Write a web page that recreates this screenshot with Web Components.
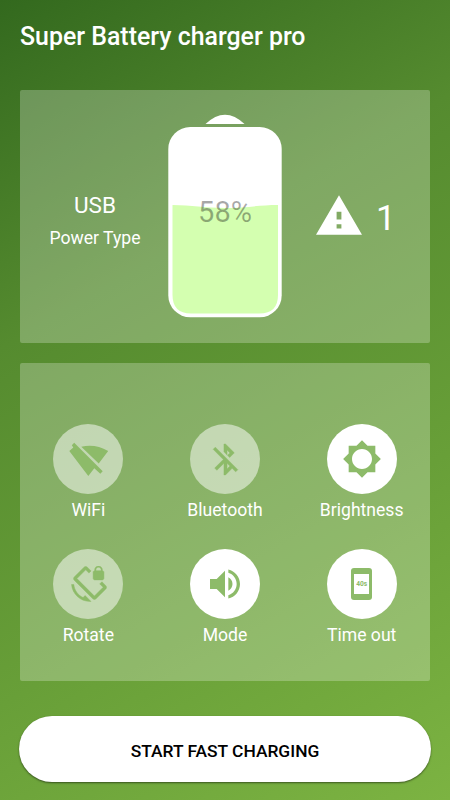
<!DOCTYPE html>
<html lang="en">
<head>
<meta charset="utf-8">
<title>Super Battery charger pro</title>
<style>
  body {
    margin: 0;
    font-family: Roboto, "Liberation Sans", sans-serif;
    color: #fff;
  }
</style>
</head>
<body>
<charger-app></charger-app>

<script>
const icons = {
  wifi: { size: 70, box: 70, path: 'M21.2 18.8L49.7 47.2 47.3 49.7 41.3 44.3 35.3 52 16.3 27 20.3 23.6 18.8 21.3zM28.3 22.8Q42 19.5 55.2 27L45.7 39.6z' },
  bluetooth: { size: 37, path: 'M13 5.83l1.88 1.88-1.6 1.6 1.41 1.41 3.02-3.02L12 2h-1v5.03l2 2v-3.2zM5.41 4L4 5.41 10.59 12 5 17.59 6.41 19 11 14.41V22h1l4.29-4.29 2.3 2.29L20 18.59 5.41 4zM13 18.17v-3.76l1.88 1.88L13 18.17z' },
  brightness: { size: 40, path: 'M20 15.31L23.31 12 20 8.69V4h-4.69L12 .69 8.69 4H4v4.69L.69 12 4 15.31V20h4.69L12 23.31 15.31 20H20v-4.69zM12 18c-3.31 0-6-2.69-6-6s2.69-6 6-6 6 2.69 6 6-2.69 6-6 6z' },
  rotate: { size: 37, path: 'M23.25 12.77l-2.57-2.57-1.41 1.41 2.22 2.22-5.66 5.66L4.51 8.17l5.66-5.66 2.1 2.1 1.41-1.41L11.23.75c-.59-.59-1.54-.59-2.12 0L2.75 7.11c-.59.59-.59 1.54 0 2.12l12.02 12.02c.59.59 1.54.59 2.12 0l6.36-6.36c.59-.59.59-1.54 0-2.12zM8.47 20.48C5.2 18.94 2.86 15.76 2.5 12H1c.51 6.16 5.66 11 11.95 11l.66-.03-3.81-3.82-1.33 1.33zM16 9h5c.55 0 1-.45 1-1V4c0-.55-.45-1-1-1v-.5C21 1.12 19.88 0 18.5 0S16 1.12 16 2.5V3c-.55 0-1 .45-1 1v4c0 .55.45 1 1 1zm.8-6.5c0-.94.76-1.7 1.7-1.7s1.7.76 1.7 1.7V3h-3.4v-.5z' },
  volume: { size: 40, path: 'M3 9v6h4l5 5V4L7 9H3zm13.5 3c0-1.77-1.02-3.29-2.5-4.03v8.05c1.48-.73 2.5-2.25 2.5-4.02zM14 3.23v2.06c2.89.86 5 3.54 5 6.71s-2.11 5.85-5 6.71v2.06c4.01-.91 7-4.49 7-8.77s-2.99-7.86-7-8.77z' }
}

class ChargerApp extends HTMLElement {
  constructor() {
    super()
    this.attachShadow({ mode: 'open' })
  }

  connectedCallback() {
    this.shadowRoot.innerHTML = this.html
  }

  get html() {
    return `
      <style>
        :host {
          display: flex;
          flex-direction: column;
          box-sizing: border-box;
          width: 450px;
          height: 800px;
          padding: 0 20px;
          overflow: hidden;
          background: linear-gradient(150.6deg, #33691e, #558b2f 33%, #689f38 67%, #7cb342);
        }
        h1 {
          box-sizing: border-box;
          height: 90px;
          margin: 0;
          padding-top: 23px;
          font-size: 24.9px;
          line-height: 28px;
          font-weight: 500;
          white-space: nowrap;
        }
        .status {
          height: 252.5px;
          margin-bottom: 20px;
          display: grid;
          grid-template-columns: 148px 114px 148px;
        }
        .toggles {
          box-sizing: border-box;
          height: 318.5px;
          padding-top: 61.5px;
          display: grid;
          grid-template-columns: repeat(3, 1fr);
          grid-auto-rows: 125px;
        }
        start-button {
          margin: 35px -1px 0;
        }
      </style>
      <h1>Super Battery charger pro</h1>
      <glass-panel class="status">
        <power-type type="USB">Power Type</power-type>
        <battery-gauge>58%</battery-gauge>
        <alert-count>1</alert-count>
      </glass-panel>
      <glass-panel class="toggles">
        <toggle-item icon="wifi">WiFi</toggle-item>
        <toggle-item icon="bluetooth">Bluetooth</toggle-item>
        <toggle-item icon="brightness" active>Brightness</toggle-item>
        <toggle-item icon="rotate">Rotate</toggle-item>
        <toggle-item icon="volume" active>Mode</toggle-item>
        <toggle-item icon="timeout" active>Time out</toggle-item>
      </glass-panel>
      <start-button>START FAST CHARGING</start-button>
    `
  }
}

class GlassPanel extends HTMLElement {
  constructor() {
    super()
    this.attachShadow({ mode: 'open' })
    this.shadowRoot.innerHTML = `
      <style>
        :host {
          display: block;
          border-radius: 2px;
          background: rgba(255, 255, 255, 0.25);
        }
      </style>
      <slot></slot>
    `
  }
}

class PowerType extends HTMLElement {
  constructor() {
    super()
    this.attachShadow({ mode: 'open' })
  }

  connectedCallback() {
    this.shadowRoot.innerHTML = `
      <style>
        :host {
          display: block;
          padding: 101px 0 0 2px;
          text-align: center;
          font-size: 17.6px;
          line-height: 22px;
        }
        .type {
          margin-bottom: 8px;
          font-size: 22.5px;
          line-height: 28px;
        }
      </style>
      <div class="type">${this.getAttribute('type')}</div>
      <slot></slot>
    `
  }
}

class BatteryGauge extends HTMLElement {
  constructor() {
    super()
    this.attachShadow({ mode: 'open' })
    this.shadowRoot.innerHTML = `
      <style>
        :host {
          position: relative;
          display: block;
          padding-top: 24px;
        }
        svg {
          display: block;
        }
        /* level text lies over the liquid */
        .level {
          position: absolute;
          left: 0;
          right: 0;
          top: 105px;
          text-align: center;
          font-size: 29px;
          line-height: 34px;
          color: rgba(0, 0, 0, 0.34);
        }
      </style>
      <svg width="114" height="204" viewBox="0 0 114 204">
        <path d="M37.5 10Q57-8.5 76.5 10z" fill="#fff"/>
        <rect x=".3" y="13" width="113.4" height="190.3" rx="22" fill="#fff"/>
        <path d="M4.5 91C24 91 36 94 57 94S91 91 110 91V181Q110 199.5 91.5 199.5H23Q4.5 199.5 4.5 181z" fill="#d4ffb0"/>
      </svg>
      <div class="level"><slot></slot></div>
    `
  }
}

class AlertCount extends HTMLElement {
  constructor() {
    super()
    this.attachShadow({ mode: 'open' })
    this.shadowRoot.innerHTML = `
      <style>
        :host {
          display: flex;
          align-items: flex-start;
          padding: 105px 0 0 34px;
          font-size: 35px;
          line-height: 48px;
        }
        svg {
          margin-right: 14px;
        }
      </style>
      <svg width="46" height="40" viewBox="0 0 22 19">
        <path d="M0 19h22L11 0zM12.15 15.9h-2.3v-2h2.3zm0-4.2h-2.3V7.9h2.3z" fill="#fff"/>
      </svg>
      <slot></slot>
    `
  }
}

class ToggleItem extends HTMLElement {
  constructor() {
    super()
    this.attachShadow({ mode: 'open' })
  }

  connectedCallback() {
    this.shadowRoot.innerHTML = this.html
  }

  get icon() {
    const name = this.getAttribute('icon')
    if (name === 'timeout') {
      return `
        <div class="phone"><div class="screen">40s</div></div>
      `
    }
    const { size, path, box = 24 } = icons[name]
    return `<svg width="${size}" height="${size}" viewBox="0 0 ${box} ${box}"><path d="${path}"/></svg>`
  }

  get html() {
    return `
      <style>
        :host {
          display: flex;
          flex-direction: column;
          align-items: center;
          font-size: 17.6px;
          line-height: 22px;
        }
        .circle {
          display: flex;
          align-items: center;
          justify-content: center;
          width: 70px;
          height: 70px;
          margin-bottom: 5px;
          border-radius: 50%;
          background: rgba(255, 255, 255, 0.5);
        }
        :host([active]) .circle {
          background: #fff;
        }
        svg {
          fill: #8dbb69;
        }
        :host([icon="bluetooth"]) svg,
        :host([icon="rotate"]) svg {
          stroke: #8dbb69;
          stroke-width: 0.3;
        }
        :host([icon="bluetooth"]) svg {
          margin-left: 1.5px;
        }
        .phone {
          box-sizing: border-box;
          width: 20.5px;
          height: 32px;
          padding: 5.5px 3px 6px;
          border-radius: 3px;
          background: #8dbb69;
        }
        .screen {
          display: flex;
          align-items: center;
          justify-content: center;
          height: 20.5px;
          background: #fff;
          color: #8dbb69;
          font-size: 6.6px;
          line-height: 8px;
          font-weight: 700;
        }
      </style>
      <div class="circle">${this.icon}</div>
      <slot></slot>
    `
  }
}

class StartButton extends HTMLElement {
  constructor() {
    super()
    this.attachShadow({ mode: 'open' })
    this.shadowRoot.innerHTML = `
      <style>
        :host {
          display: block;
        }
        button {
          display: block;
          width: 100%;
          height: 66px;
          padding: 4px 0 0;
          border: 0;
          border-radius: 33px;
          background: #fff;
          box-shadow: 0 1px 2px rgba(0, 0, 0, 0.5);
          color: #000;
          font: 500 17.4px Roboto, "Liberation Sans", sans-serif;
        }
      </style>
      <button><slot></slot></button>
    `
  }
}

customElements.define('glass-panel', GlassPanel)
customElements.define('power-type', PowerType)
customElements.define('battery-gauge', BatteryGauge)
customElements.define('alert-count', AlertCount)
customElements.define('toggle-item', ToggleItem)
customElements.define('start-button', StartButton)
customElements.define('charger-app', ChargerApp)
</script>
</body>
</html>
